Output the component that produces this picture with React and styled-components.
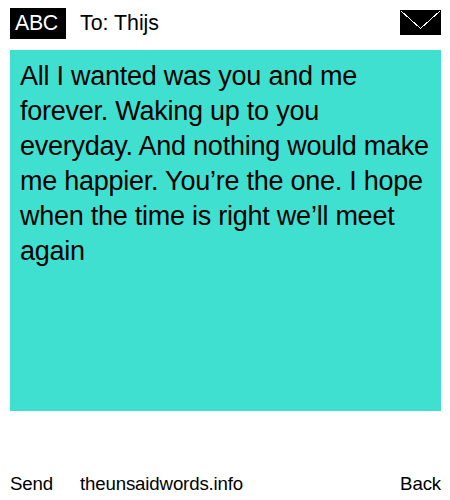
import React from 'react'
import styled, { createGlobalStyle } from 'styled-components'

const GlobalStyle = createGlobalStyle`
  body {
    margin: 0;
    background: #fff;
  }
`
const Screen = styled.div`
  display: flex;
  flex-direction: column;
  box-sizing: border-box;
  width: 450px;
  height: 500px;
  padding: 8px 9px 4px 10px;
  font-family: 'Liberation Sans', Arial, sans-serif;
  color: #000;
  white-space: nowrap;
  overflow: hidden;
`
const Header = styled.header`
  display: flex;
  align-items: flex-start;
  height: 42px;
`
const InputMode = styled.span`
  box-sizing: border-box;
  width: 56px;
  height: 31px;
  padding-left: 5px;
  margin-right: 14px;
  background: #000;
  color: #fff;
  font-size: 16pt;
  letter-spacing: -0.3px;
  line-height: 30px;
`
const Recipient = styled.span`
  flex: 1;
  font-size: 16pt;
  line-height: 30px;
`
const Envelope = styled.svg`
  width: 41px;
  height: 25px;
  margin-top: 2px;
`
const Message = styled.main`
  box-sizing: border-box;
  height: 361px;
  padding: 9px 10px;
  background: #40e0d0;
  font-size: 27px;
  letter-spacing: -0.25px;
  line-height: 35px;
`
const Line = styled.div``
const Footer = styled.footer`
  display: flex;
  align-items: center;
  height: 24px;
  margin-top: auto;
  font-size: 14pt;
  letter-spacing: -0.15px;
`
const Send = styled.span`
  width: 70px;
`
const Site = styled.span`
  flex: 1;
`
const Back = styled.span``

const lines = [
  'All I wanted was you and me',
  'forever. Waking up to you',
  'everyday. And nothing would make',
  'me happier. You’re the one. I hope',
  'when the time is right we’ll meet',
  'again',
]

function App() {
  return (
    <Screen>
      <GlobalStyle />
      <Header>
        <InputMode>ABC</InputMode>
        <Recipient>To: Thijs</Recipient>
        <Envelope viewBox="0 0 41 25" shapeRendering="crispEdges">
          <rect width="41" height="25" fill="#000" />
          <path d="M1 1L20.5 18.5L40 1" fill="none" stroke="#fff" />
        </Envelope>
      </Header>
      <Message>
        {lines.map((line) => (
          <Line key={line}>{line}</Line>
        ))}
      </Message>
      <Footer>
        <Send>Send</Send>
        <Site>theunsaidwords.info</Site>
        <Back>Back</Back>
      </Footer>
    </Screen>
  )
}

export default App
